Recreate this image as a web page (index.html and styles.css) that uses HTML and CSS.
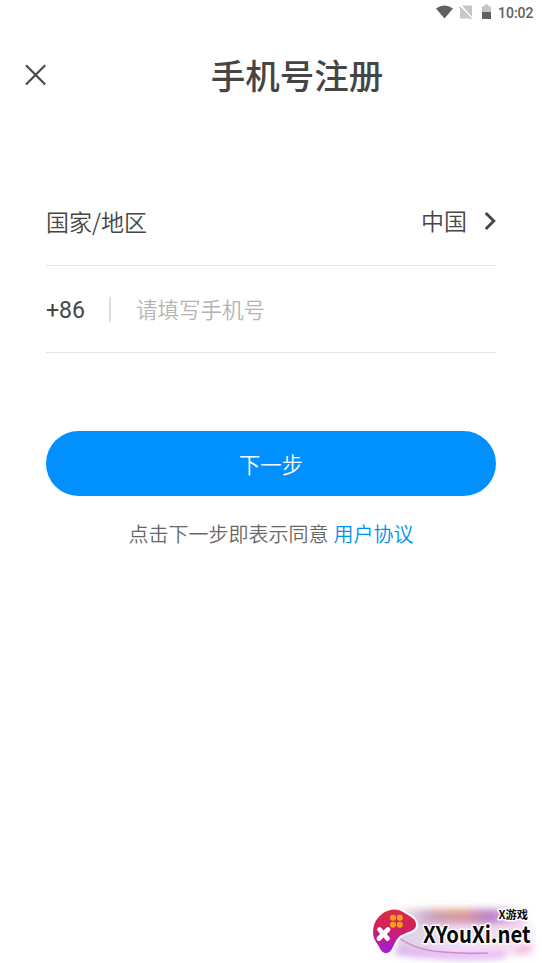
FILE: index.html
```html
<!DOCTYPE html>
<html lang="zh-CN">
<head>
<meta charset="utf-8">
<title>手机号注册</title>
<link rel="stylesheet" href="styles.css">
</head>
<body>
<div class="screen">
  <div class="status">
    <svg class="status-icons" width="57" height="18" viewBox="0 0 57 18">
      <path d="M0 4.600Q8.500-1.500 17 4.600L8.500 14.500Z" fill="#606060"/>
      <path d="M26 1.500H36V13zM24 4.500V14.500H33.500z" fill="#c6c6c6"/>
      <path d="M23.500 3l11.800 12" stroke="#b5b5b5" stroke-width="1.200"/>
      <path d="M46 2.500h2.500V.5h4v2H55V8h-9z" fill="#c4c4c4"/>
      <path d="M46 8h9v7h-9z" fill="#606060"/>
    </svg>
    <span class="clock">10:02</span>
  </div>
  <header class="header">
    <svg class="close" width="22" height="22" viewBox="0 0 22 22"><path d="M1 1.300l19.200 19.200M20.200 1.300L1 20.500" fill="none" stroke="#4a4a4a" stroke-width="2.200"/></svg>
    <h1 class="title">手机号注册</h1>
  </header>
  <main class="form">
    <div class="row region">
      <span>国家/地区</span>
      <span class="country">中国</span>
      <svg class="chevron" width="12" height="20" viewBox="0 0 12 20"><path d="M1.800 2l8 8-8 8" fill="none" stroke="#454545" stroke-width="2.900"/></svg>
    </div>
    <div class="row phone">
      <span class="code">+86</span>
      <span class="divider"></span>
      <span class="placeholder">请填写手机号</span>
    </div>
    <button class="next">下一步</button>
    <p class="terms">点击下一步即表示同意 <a class="link">用户协议</a></p>
  </main>
  <div class="watermark">
    <svg width="180" height="68" viewBox="362 895 180 68">
      <defs>
        <linearGradient id="pad" x1="0" y1="0" x2="0" y2="1">
          <stop offset="0" stop-color="#d62e45"/><stop offset=".4" stop-color="#d3205c"/><stop offset="1" stop-color="#a31bdc"/>
        </linearGradient>
        <linearGradient id="band" x1="0" y1="0" x2="1" y2="0">
          <stop offset="0" stop-color="#efe8f6"/><stop offset=".25" stop-color="#cba2c3"/><stop offset=".5" stop-color="#d99aa0"/><stop offset=".72" stop-color="#bd80c8"/><stop offset="1" stop-color="#f0e0f6"/>
        </linearGradient>
        <linearGradient id="glow" x1="0" y1="0" x2="1" y2="0">
          <stop offset="0" stop-color="#b9aace"/><stop offset=".5" stop-color="#e6c4f5"/><stop offset="1" stop-color="#f6c0e2"/>
        </linearGradient>
        <filter id="soft" x="-20%" y="-50%" width="140%" height="200%"><feGaussianBlur stdDeviation="3.500"/></filter>
      </defs>
      <g filter="url(#soft)">
        <rect x="400" y="909" width="126" height="15" fill="url(#band)"/>
        <rect x="397" y="924" width="134" height="31" fill="url(#glow)" opacity=".55"/>
        <path d="M430 911h38" stroke="#e3a65f" stroke-width="4" opacity=".6"/>
        <path d="M395 951q60 9 110 4" fill="none" stroke="#d58ff0" stroke-width="6" opacity=".7"/>
        <path d="M515 953l18-6" stroke="#ec78b8" stroke-width="5" opacity=".5"/>
      </g>
      <path d="M398 937q16 13 45 15 22 2 45 1" fill="none" stroke="#cf3f94" stroke-width="1.600" opacity=".5"/>
      <path d="M382 914C388 909 397 908 403 912C409 916 416 918 416 925C416 932 404 932 399 937C393 943 393 952 387 953C381 954 380 947 376 942C371 935 372 921 382 914Z" fill="url(#pad)" stroke="#fff" stroke-width="4" paint-order="stroke"/>
      <g fill="#f8a21b"><circle cx="393" cy="917.800" r="3"/><circle cx="399.800" cy="917.800" r="3"/><circle cx="393" cy="924.800" r="3"/><circle cx="399.800" cy="924.800" r="3"/></g>
      <path d="M379.500 929.500l8 9M388 929.500l-9 9" stroke="#fff" stroke-width="4.800" stroke-linecap="round"/>
      <text class="brand" x="423" y="942.700" textLength="107.500" lengthAdjust="spacingAndGlyphs">XYouXi.net</text>
      <text class="brand-small" x="498.500" y="919" textLength="29.500" lengthAdjust="spacingAndGlyphs">X游戏</text>
    </svg>
  </div>
</div>
</body>
</html>
```
FILE: styles.css
```css
* { box-sizing: border-box; }
body {
  margin: 0;
  background: #fff;
  color: #454545;
  font-family: Roboto, "Noto Sans CJK SC", sans-serif;
}
.screen {
  height: 963px;
  display: flex;
  flex-direction: column;
  overflow: hidden;
}
.status {
  height: 26px;
  padding: 4px 8px 0 0;
  display: flex;
  justify-content: flex-end;
  align-items: flex-start;
}
.status-icons { margin-right: 5px; }
.clock {
  width: 36px;
  font-size: 14px;
  line-height: 18px;
  font-weight: 500;
  color: #606060;
  white-space: nowrap;
}
.header {
  height: 98px;
  display: grid;
  grid-template-columns: 52px 1fr 0;
  align-items: center;
}
.close { margin-left: 25px; }
.title {
  margin: 0;
  padding-bottom: 2px;
  text-align: center;
  font-family: "Noto Sans CJK SC", sans-serif;
  font-size: 34.5px;
  line-height: 50px;
  font-weight: 500;
  color: #454545;
}
.form { padding: 54px 46px 0; }
.row {
  display: flex;
  align-items: center;
  border-bottom: 1px solid #e6e6e6;
  font-size: 23px;
}
.region {
  height: 88px;
  padding-bottom: 2px;
  font-family: "Noto Sans CJK SC", sans-serif;
  font-weight: 350;
}
.country { margin-left: auto; padding-bottom: 1px; }
.chevron { margin-left: 17px; }
.phone { height: 87px; }
.code { width: 63px; padding-top: 2px; }
.divider { width: 2px; height: 25px; background: #dedede; }
.placeholder {
  margin-left: 25px;
  padding-bottom: 2px;
  font-size: 21.5px;
  font-weight: 350;
  color: #b4b4b4;
}
.next {
  display: block;
  width: 100%;
  height: 65px;
  margin-top: 78px;
  padding: 0;
  border: 0;
  border-radius: 33px;
  background: #0090ff;
  color: #fff;
  font: 350 21.3px/65px "Noto Sans CJK SC", sans-serif;
}
.terms {
  margin: 24px 0 0;
  text-align: center;
  font-size: 20px;
  line-height: 30px;
  font-weight: 350;
  color: #686868;
}
.link { color: #0090ee; }
.watermark { margin-top: auto; align-self: flex-end; height: 68px; }
.watermark svg { display: block; }
.brand, .brand-small {
  font-family: "Noto Sans CJK SC", sans-serif;
  font-weight: 700;
  fill: #080808;
  stroke: #fff;
  stroke-width: 3px;
  stroke-linejoin: round;
  paint-order: stroke;
}
.brand { font-size: 23px; }
.brand-small { font-size: 11.5px; }
```
